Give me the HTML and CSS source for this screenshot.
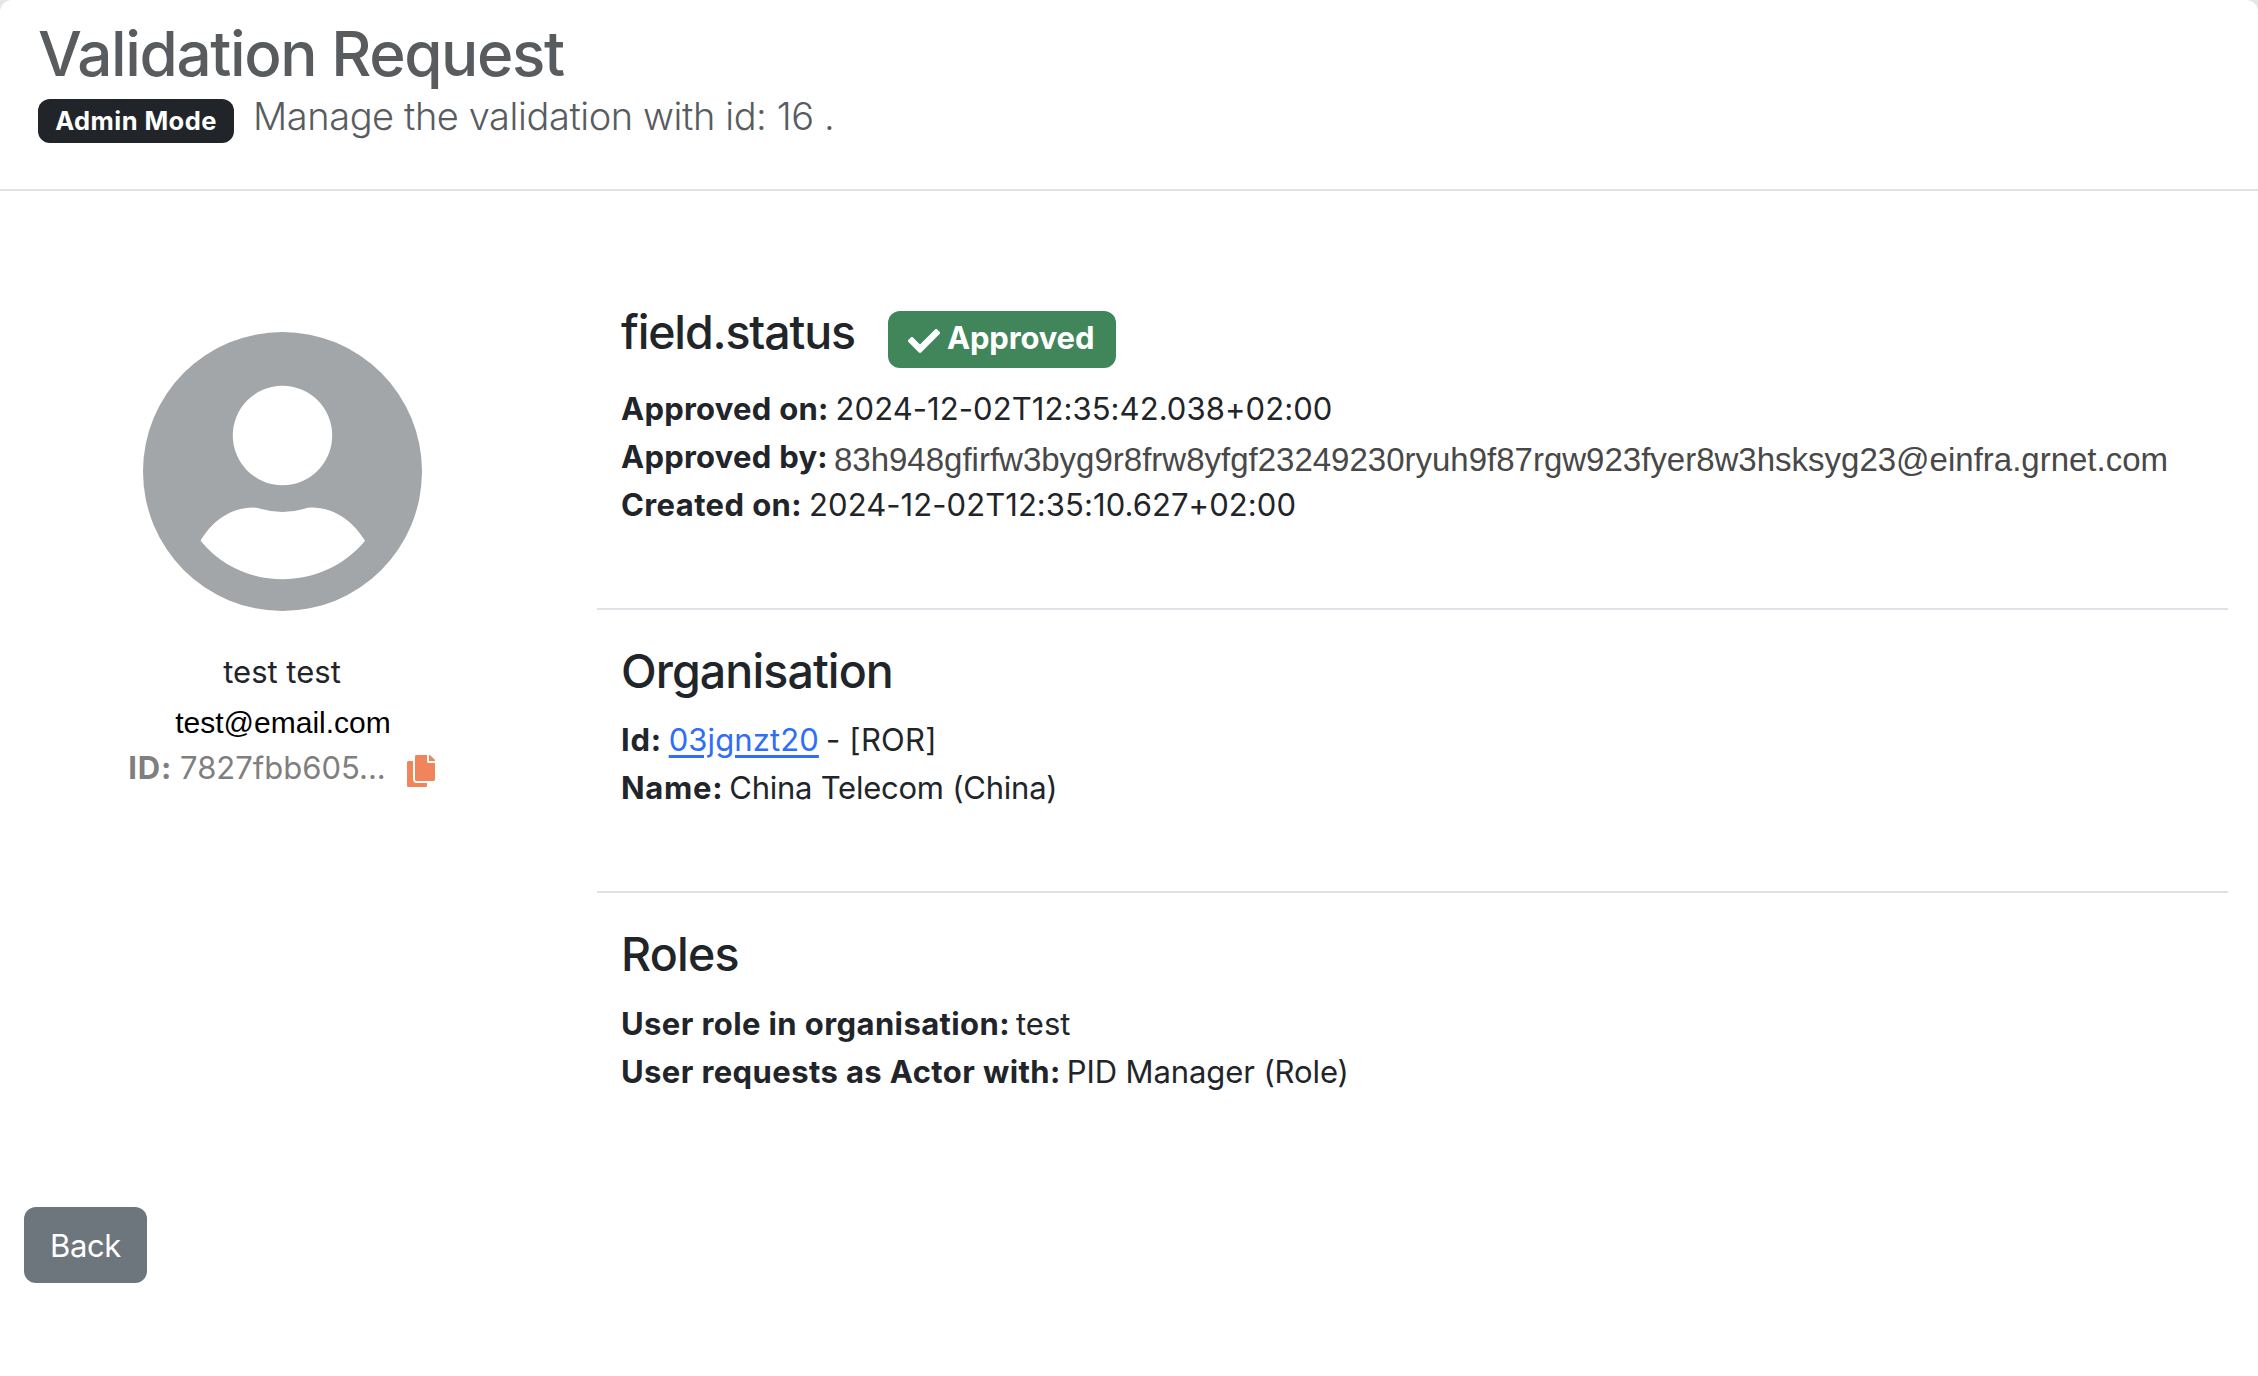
FILE: index.html
```html
<!DOCTYPE html>
<html lang="en">
<head>
<meta charset="utf-8">
<title>Validation Request</title>
<link rel="stylesheet" href="styles.css">
</head>
<body>
<div class="page">
  <header class="page-header">
    <h1 class="page-title">Validation Request</h1>
    <div class="page-subtitle">
      <span class="badge-dark">Admin Mode</span>
      <span class="lead">Manage the validation with id: 16 .</span>
    </div>
  </header>
  <main class="content">
    <aside class="profile">
      <svg class="avatar" viewBox="0 0 279 279" aria-hidden="true">
        <path fill="#a2a6a9" fill-rule="evenodd" d="M139.5 0a139.5 139.5 0 1 1 0 279a139.5 139.5 0 1 1 0-279zM139.5 53.8a49.7 49.7 0 1 0 0 99.4a49.7 49.7 0 1 0 0-99.4zM57.6 208.7C69 189 88 175.5 110 175.5Q114.500 175.500 118.500 176.900Q139.500 183 160.500 176.900Q164.500 175.500 169 175.500C191 175.500 210 189 222 208.700C180 260 99 260 57.600 208.700z"/>
      </svg>
      <div class="profile-name">test test</div>
      <div class="profile-email">test@email.com</div>
      <div class="profile-id">
        <b>ID:</b><span>7827fbb605...</span>
        <svg class="copy-icon" viewBox="0 0 448 512" aria-hidden="true"><path fill="currentColor" d="M320 448v40c0 13.255-10.745 24-24 24H24c-13.255 0-24-10.745-24-24V120c0-13.255 10.745-24 24-24h72v296c0 30.879 25.121 56 56 56h168zm0-344V0H152c-13.255 0-24 10.745-24 24v368c0 13.255 10.745 24 24 24h272c13.255 0 24-10.745 24-24V128H344c-13.200 0-24-10.800-24-24zm120.971-31.029L375.029 7.029A24 24 0 0 0 358.059 0H352v96h96v-6.059a24 24 0 0 0-7.029-16.970z"/></svg>
      </div>
    </aside>
    <div class="details">
      <section class="section">
        <div class="status-row">
          <h2 class="heading heading-status">field.status</h2>
          <span class="badge-success">
            <svg class="check-icon" viewBox="0 0 512 512" aria-hidden="true"><path fill="currentColor" d="M173.898 439.404l-166.400-166.400c-9.997-9.997-9.997-26.206 0-36.204l36.203-36.204c9.997-9.998 26.207-9.998 36.204 0L192 312.690 432.095 72.596c9.997-9.997 26.207-9.997 36.204 0l36.203 36.204c9.997 9.997 9.997 26.206 0 36.204l-294.400 294.401c-9.998 9.997-26.207 9.997-36.204-.001z"/></svg>
            <span class="badge-label">Approved</span>
          </span>
        </div>
        <div class="row"><b>Approved on:</b><span class="date">2024-12-02T12:35:42.038+02:00</span></div>
        <div class="row"><b>Approved by:</b><span class="approver">83h948gfirfw3byg9r8frw8yfgf23249230ryuh9f87rgw923fyer8w3hsksyg23@einfra.grnet.com</span></div>
        <div class="row"><b class="long">Created on:</b><span class="date">2024-12-02T12:35:10.627+02:00</span></div>
      </section>
      <section class="section">
        <h2 class="heading">Organisation</h2>
        <div class="row"><b class="short">Id:</b><a class="link" href="#">03jgnzt20</a><span class="source">- [ROR]</span></div>
        <div class="row"><b class="short">Name:</b><span class="org-name">China Telecom (China)</span></div>
      </section>
      <section class="section">
        <h2 class="heading heading-roles">Roles</h2>
        <div class="row"><b class="long">User role in organisation:</b><span>test</span></div>
        <div class="row"><b class="long">User requests as Actor with:</b><span class="actor">PID Manager (Role)</span></div>
      </section>
    </div>
  </main>
  <button class="back" type="button">Back</button>
</div>
</body>
</html>
```
FILE: styles.css
```css
* { box-sizing: border-box; }
body {
  margin: 0;
  background: #e6e6e6;
  color: #212529;
  font: 400 31px/48px Inter, "Liberation Sans", sans-serif;
}
h1, h2 { margin: 0; font-weight: 500; }
b { font-weight: 700; letter-spacing: .25px; }
svg { display: block; flex: none; }

.page {
  height: 1376px;
  background: #fff;
  border-radius: 12px 12px 0 0;
  overflow: hidden;
}
.page-header {
  height: 191px;
  padding: 16px 38px 0;
  border-bottom: 2px solid #dee2e6;
  color: #585c5f;
}
.page-title { font-size: 62px; line-height: 76px; letter-spacing: -1.4px; }
.page-subtitle { display: flex; align-items: flex-start; }
.badge-dark {
  height: 44px;
  width: 196px;
  margin-top: 7px;
  border-radius: 12px;
  background: #212529;
  color: #fff;
  font-size: 25.5px;
  font-weight: 700;
  line-height: 44px;
  letter-spacing: .43px;
  text-align: center;
}
.lead {
  margin-left: 19px;
  font-size: 38px;
  font-weight: 300;
  line-height: 48px;
  letter-spacing: -.42px;
}

.content {
  display: grid;
  grid-template-columns: 564px 1631px;
  column-gap: 33px;
  height: 1016px;
}
.profile {
  display: flex;
  flex-direction: column;
  align-items: center;
  padding-top: 141px;
}
.avatar { width: 279px; height: 279px; }
.profile-name { margin-top: 37px; }
.profile-email {
  margin-top: 3px;
  padding-left: 2px;
  color: #000;
  font-family: "Liberation Sans", Arial, sans-serif;
  font-size: 30px;
}
.profile-id {
  display: flex;
  align-items: center;
  gap: 8px;
  margin: -3px 0 0 -1px;
  color: #7f7f7f;
}
.profile-id b { letter-spacing: .8px; }
.copy-icon { width: 28px; height: 32px; margin: 6px 0 0 13px; color: #f0855b; }

.section { padding: 32px 24px 79px; border-bottom: 2px solid #dee2e6; }
.section:first-child { padding-top: 112px; }
.section:last-child { border-bottom: 0; }
.heading {
  margin-bottom: 16px;
  font-size: 46.5px;
  line-height: 58px;
  letter-spacing: -.9px;
}
.heading-status { margin-bottom: 0; letter-spacing: -1.15px; }
.heading-roles { margin-bottom: 17px; letter-spacing: -.8px; }
.status-row { display: flex; height: 82px; }
.badge-success {
  display: flex;
  align-items: center;
  width: 228px;
  height: 57px;
  margin: 8px 0 0 33px;
  padding-left: 20px;
  gap: 7px;
  border-radius: 12px;
  background: #40865a;
  color: #fff;
  font-weight: 700;
  letter-spacing: -.15px;
}
.badge-label { padding-bottom: 3px; }
.check-icon { width: 32px; height: 32px; margin-top: 2px; }
.row { display: flex; gap: 6px; height: 48px; white-space: nowrap; }
.date { margin-left: 1px; letter-spacing: .07px; }
.approver {
  padding-top: 3px;
  color: #484848;
  font-family: "Liberation Sans", Arial, sans-serif;
  font-size: 33px;
}
.short { letter-spacing: .7px; }
.long { letter-spacing: .4px; }
.link { margin-left: 1px; color: #2f6ef6; letter-spacing: .1px; text-underline-offset: 4px; text-decoration-thickness: 3px; }
.source { margin-left: 1px; letter-spacing: .25px; }
.org-name { letter-spacing: -.24px; }
.actor { letter-spacing: -.1px; }

.back {
  display: block;
  width: 123px;
  height: 76px;
  margin-left: 24px;
  padding: 1px 0 0;
  border: 0;
  border-radius: 12px;
  background: #6d757d;
  color: #fff;
  font: inherit;
  letter-spacing: -.4px;
}
```
